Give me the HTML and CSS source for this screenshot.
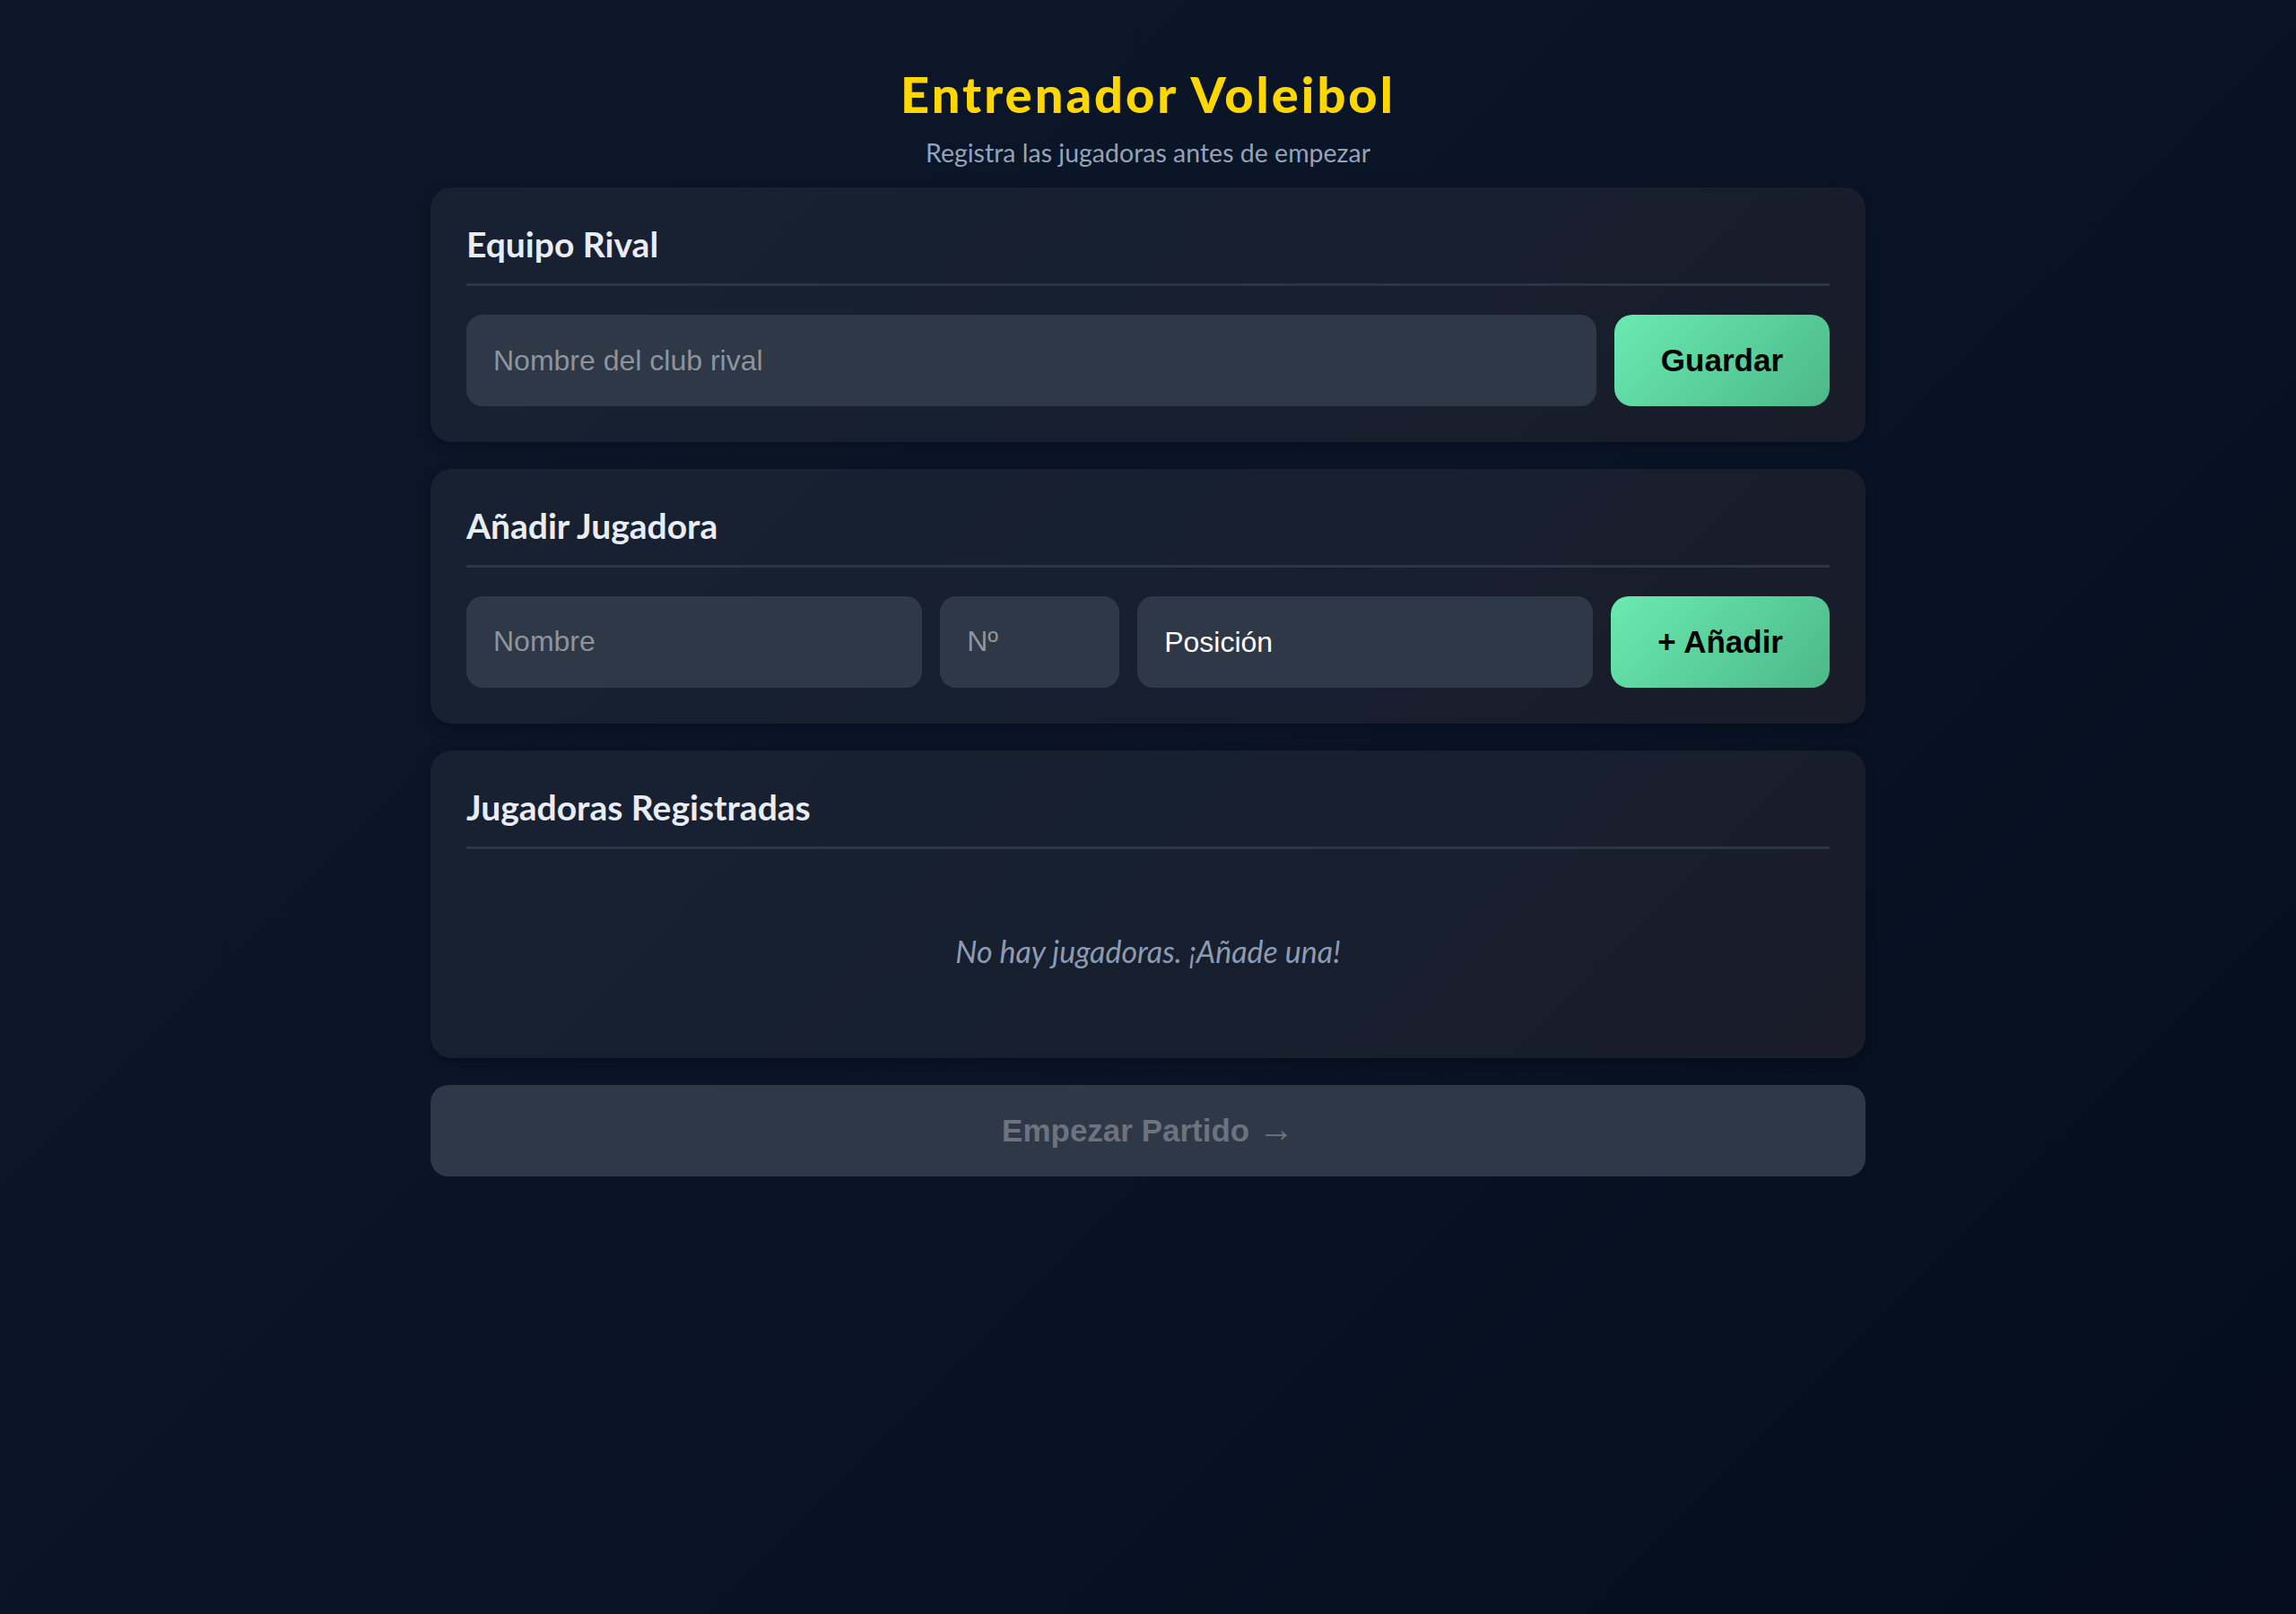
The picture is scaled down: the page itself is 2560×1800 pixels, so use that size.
FILE: index.html
```html
<!DOCTYPE html>
<html lang="es">

<head>
	<meta charset="utf-8">
	<meta name="viewport" content="width=device-width, initial-scale=1">
	<title>Entrenador Voleibol</title>
	<link rel="stylesheet" href="styles.css">
</head>

<body>
	<div class="container">
		<header class="page-head">
			<h1 class="page-title">Entrenador Voleibol</h1>
			<p class="page-sub">Registra las jugadoras antes de empezar</p>
		</header>

		<section class="card">
			<h2 class="card-title">Equipo Rival</h2>
			<div class="form-row">
				<input class="field grow" type="text" placeholder="Nombre del club rival">
				<button class="btn-green">Guardar</button>
			</div>
		</section>

		<section class="card">
			<h2 class="card-title">Añadir Jugadora</h2>
			<div class="form-row">
				<input class="field grow" type="text" placeholder="Nombre">
				<input class="field num" type="number" placeholder="Nº">
				<select class="field grow">
					<option>Posición</option>
					<option>Colocadora</option>
					<option>Opuesta</option>
					<option>Central</option>
					<option>Receptora</option>
					<option>Líbero</option>
				</select>
				<button class="btn-green">+ Añadir</button>
			</div>
		</section>

		<section class="card">
			<h2 class="card-title">Jugadoras Registradas</h2>
			<div class="player-list">
				<p class="empty-msg">No hay jugadoras. ¡Añade una!</p>
			</div>
		</section>

		<button class="btn-start" disabled>Empezar Partido <span class="arrow">→</span></button>
	</div>
</body>

</html>
```

FILE: styles.css
```css
:root {
	--bg-top:        #0c1729;
	--bg-bottom:     #050d1c;
	--card-bg:       #172030;
	--field-bg:      #2f3846;
	--divider-color: #2c3544;
	--gold:          #ffd700;
	--heading-color: #e8edf5;
	--muted-color:   #94a3b8;
	--green-light:   #6aeab0;
	--green-dark:    #4cb888;
}
* {
	margin: 0;
	padding: 0;
	box-sizing: border-box;
}
html, body {
	min-height: 100%;
}
body {
	min-height: 100vh;
	background: linear-gradient(135deg, var(--bg-top) 0%, #091427 50%, var(--bg-bottom) 100%);
	font-family: Lato, "Open Sans", sans-serif;
	color: var(--heading-color);
}
.container {
	max-width: 1600px;
	margin: 0 auto;
	padding: 71px 0 40px;
	display: flex;
	flex-direction: column;
	gap: 30px;
}
.page-head {
	text-align: center;
	margin-bottom: -8px;
}
.page-title {
	font-size: 56px;
	font-weight: 900;
	letter-spacing: 3px;
	line-height: 1.2;
	color: var(--gold);
}
.page-sub {
	margin-top: 15px;
	font-size: 28.5px;
	line-height: 1.2;
	color: var(--muted-color);
}
.card {
	background: linear-gradient(135deg, #182132 0%, #171f2e 60%, #1a1c29 100%);
	border-radius: 24px;
	padding: 40px 40px 40px;
	box-shadow: rgba(0, 0, 0, 0.25) 0 4px 14px;
}
.card-title {
	font-size: 39px;
	font-weight: 700;
	line-height: 1.2;
	padding-bottom: 20px;
	margin-bottom: 32px;
	border-bottom: 3px solid var(--divider-color);
}
.form-row {
	display: flex;
	gap: 20px;
}
.field {
	height: 102px;
	padding: 0 30px;
	border: 0;
	border-radius: 18px;
	background: var(--field-bg);
	font-family: "Liberation Sans", Arial, sans-serif;
	font-size: 32px;
	color: #ffffff;
	outline: none;
	appearance: none;
	-webkit-appearance: none;
}
.field::placeholder {
	color: #8e949d;
}
.field.grow {
	flex: 1;
	min-width: 0;
}
.field.num {
	width: 200px;
}
.btn-green {
	height: 102px;
	padding: 0 52px;
	border: 0;
	border-radius: 20px;
	background: linear-gradient(135deg, var(--green-light), var(--green-dark));
	font-family: "Liberation Sans", Arial, sans-serif;
	font-size: 35px;
	font-weight: 700;
	color: #000000;
}
.player-list {
	padding: 62px 0 58px;
	text-align: center;
}
.empty-msg {
	font-size: 34px;
	line-height: 1.2;
	font-style: italic;
	color: #8b9bb4;
}
.btn-start {
	height: 102px;
	border: 0;
	border-radius: 20px;
	background: var(--field-bg);
	font-family: "Liberation Sans", Arial, sans-serif;
	font-size: 35px;
	font-weight: 700;
	line-height: 1;
	color: #6b7280;
}
.btn-start .arrow {
	font-size: 40px;
	font-weight: 400;
	line-height: 0;
}
```
